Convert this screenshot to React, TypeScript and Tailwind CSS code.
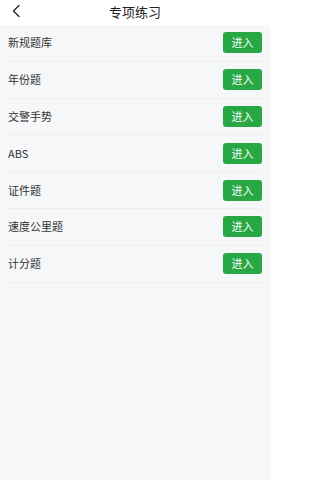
import React from "react";

const items = ["新规题库", "年份题", "交警手势", "ABS", "证件题", "速度公里题", "计分题"];

export default function App() {
  return (
    <div
      className="w-[270px] h-[480px] bg-[#f6f7f9] flex flex-col"
      style={{ fontFamily: '"Noto Sans CJK SC", "Noto Sans", sans-serif' }}
    >
      <div className="relative h-[25px] bg-white flex items-center justify-center shrink-0">
        <svg
          className="absolute left-[11px] top-[4px]"
          width="12"
          height="14"
          viewBox="0 0 12 14"
          fill="none"
        >
          <path d="M8 1.5 L2.5 7 L8 12.5" stroke="#222" strokeWidth="1.3" strokeLinecap="round" strokeLinejoin="round" />
        </svg>
        <span className="text-[13px] leading-none text-[#222] -mt-[3px]">专项练习</span>
      </div>
      <div className="px-2 flex flex-col">
        {items.map((t) => (
          <div
            key={t}
            className="h-[36.8px] flex items-center justify-between border-b border-[#eceef1]"
          >
            <span className="text-[11px] text-[#333] leading-none">{t}</span>
            <button className="w-[39px] h-[21px] rounded-[3px] bg-[#28a745] text-white text-[11px] leading-none flex items-center justify-center">
              进入
            </button>
          </div>
        ))}
      </div>
    </div>
  );
}
